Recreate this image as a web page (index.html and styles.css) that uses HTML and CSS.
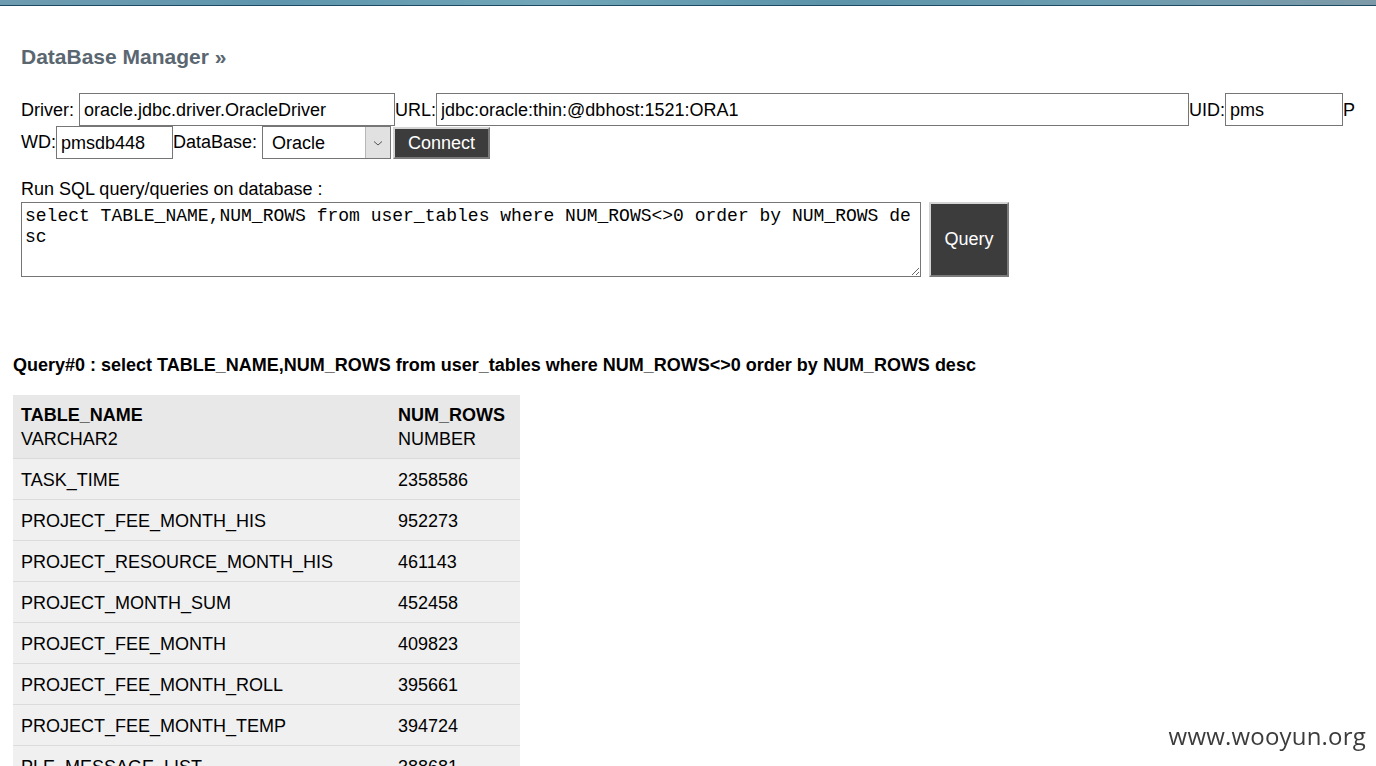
FILE: index.html
```html
<!DOCTYPE html>
<html>
<head>
<meta charset="utf-8">
<title>DataBase Manager</title>
<link rel="stylesheet" href="styles.css">
</head>
<body>
<div class="band"></div>
<div class="page">
  <form class="dbform">
    <h2 class="title">DataBase Manager »</h2>
    <div class="row row1">
      <span class="lbl">Driver:&nbsp;</span><input class="inp w-driver" type="text" value="oracle.jdbc.driver.OracleDriver"><span class="lbl">URL:</span><input class="inp w-url" type="text" value="jdbc:oracle:thin:@dbhost:1521:ORA1"><span class="lbl">UID:</span><input class="inp w-uid" type="text" value="pms"><span class="lbl">P</span>
    </div>
    <div class="row row2">
      <span class="lbl">WD:</span><input class="inp w-pwd" type="text" value="pmsdb448"><span class="lbl">DataBase:&nbsp;</span><div class="sel"><span class="sel-text">Oracle</span><span class="sel-arrow"><svg width="12" height="8" viewBox="0 0 12 8"><path d="M2 2.5 L6 6 L10 2.5" fill="none" stroke="#555" stroke-width="1"/></svg></span></div><button class="btn btn-connect" type="button">Connect</button>
    </div>
    <div class="sqlhead">Run SQL query/queries on database :</div>
    <div class="sqlrow">
      <textarea class="sql" spellcheck="false">select TABLE_NAME,NUM_ROWS from user_tables where NUM_ROWS&lt;&gt;0 order by NUM_ROWS desc</textarea>
      <button class="btn btn-query" type="button">Query</button>
    </div>
  </form>

  <div class="result">
    <div class="qtitle">Query#0 : select TABLE_NAME,NUM_ROWS from user_tables where NUM_ROWS&lt;&gt;0 order by NUM_ROWS desc</div>
    <table class="grid">
      <thead>
        <tr><th class="c1"><b>TABLE_NAME</b><br>VARCHAR2</th><th class="c2"><b>NUM_ROWS</b><br>NUMBER</th></tr>
      </thead>
      <tbody>
        <tr><td>TASK_TIME</td><td>2358586</td></tr>
        <tr><td>PROJECT_FEE_MONTH_HIS</td><td>952273</td></tr>
        <tr><td>PROJECT_RESOURCE_MONTH_HIS</td><td>461143</td></tr>
        <tr><td>PROJECT_MONTH_SUM</td><td>452458</td></tr>
        <tr><td>PROJECT_FEE_MONTH</td><td>409823</td></tr>
        <tr><td>PROJECT_FEE_MONTH_ROLL</td><td>395661</td></tr>
        <tr><td>PROJECT_FEE_MONTH_TEMP</td><td>394724</td></tr>
        <tr><td>PLE_MESSAGE_LIST</td><td>388681</td></tr>
      </tbody>
    </table>
  </div>
</div>
<div class="watermark">www.wooyun.org</div>
</body>
</html>
```
FILE: styles.css
```css
html, body {
  margin: 0;
  padding: 0;
  background: #ffffff;
  overflow: hidden;
}
body {
  font-family: "Liberation Sans", Arial, sans-serif;
  font-size: 18px;
  color: #000;
}
.band {
  height: 6px;
  background: linear-gradient(90deg, #6f9cb0 0%, #5f96ad 20%, #72a6b8 40%, #5d94aa 60%, #6c9db0 80%, #7e9aa8 100%);
  border-bottom: 1px solid #1d4a63;
  box-sizing: border-box;
}
.page {
  padding: 0 13px;
}
.dbform {
  padding-left: 8px;
  margin: 0;
}
.title {
  margin: 0;
  padding-top: 38px;
  font-size: 21px;
  font-weight: bold;
  color: #5b6770;
  line-height: 26px;
  height: 26px;
}
.row {
  display: flex;
  align-items: center;
  white-space: nowrap;
}
.row1 {
  margin-top: 23px;
  height: 33px;
}
.row2 {
  height: 32px;
}
.lbl {
  font-size: 18px;
  line-height: 22px;
}
.inp {
  box-sizing: border-box;
  height: 33px;
  border: 1px solid #767676;
  padding: 1px 4px 0 4px;
  font-family: "Liberation Sans", Arial, sans-serif;
  font-size: 18px;
  color: #000;
  background: #fff;
  outline: none;
  margin: 0;
}
.row2 .inp { height: 33px; margin-top: 1px; }
.w-driver { width: 316px; }
.w-url { width: 753px; }
.w-uid { width: 118px; }
.w-pwd { width: 117px; }
.sel {
  box-sizing: border-box;
  width: 129px;
  height: 33px;
  margin-top: 1px;
  border: 1px solid #767676;
  display: flex;
  align-items: stretch;
  background: #fff;
}
.sel-text {
  flex: 1;
  padding-left: 9px;
  font-size: 18px;
  line-height: 32px;
}
.sel-arrow {
  width: 24px;
  background: #e1e1e1;
  border-left: 1px solid #b8b8b8;
  display: flex;
  align-items: center;
  justify-content: center;
}
.btn {
  box-sizing: border-box;
  background: #3c3c3c;
  color: #fff;
  font-family: "Liberation Sans", Arial, sans-serif;
  font-size: 18px;
  border-style: solid;
  border-width: 2px;
  border-color: #d4d4d4 #7a7a7a #7a7a7a #d4d4d4;
  padding: 0;
  margin: 0;
  cursor: pointer;
}
.btn-connect {
  width: 97px;
  height: 32px;
  margin-left: 2px;
  margin-top: 1px;
  line-height: 26px;
}
.sqlhead {
  margin-top: 21px;
  font-size: 18px;
  line-height: 20px;
}
.sqlrow {
  display: flex;
  align-items: flex-start;
  margin-top: 3px;
}
.sql {
  box-sizing: border-box;
  width: 900px;
  height: 75px;
  border: 1px solid #767676;
  padding: 3px 8px 2px 3px;
  margin: 0;
  font-family: "Liberation Mono", "Courier New", monospace;
  font-size: 18px;
  line-height: 21px;
  color: #000;
  word-break: break-all;
  overflow: hidden;
  resize: both;
  outline: none;
}
.btn-query {
  width: 80px;
  height: 75px;
  margin-left: 8px;
  font-size: 18px;
}
.result {
  margin-top: 77px;
}
.qtitle {
  font-weight: bold;
  font-size: 18px;
  line-height: 22px;
}
.grid {
  margin-top: 19px;
  border-collapse: collapse;
  width: 507px;
  font-size: 18px;
}
.grid th {
  text-align: left;
  font-weight: normal;
  background: #e8e8e8;
  padding: 8px 8px 7px 8px;
  line-height: 24px;
  vertical-align: top;
  border-bottom: 1px solid #dadada;
}
.grid th.c1 { width: 361px; }
.grid td {
  background: #f0f0f0;
  height: 39px;
  padding: 1px 8px 0 8px;
  line-height: 22px;
  border-bottom: 1px solid #dcdcdc;
  vertical-align: middle;
}
.watermark {
  position: fixed;
  right: 10px;
  bottom: 14px;
  font-family: "Open Sans", "Noto Sans", sans-serif;
  font-size: 24px;
  color: #3c3c3c;
  letter-spacing: 0.2px;
}
```
